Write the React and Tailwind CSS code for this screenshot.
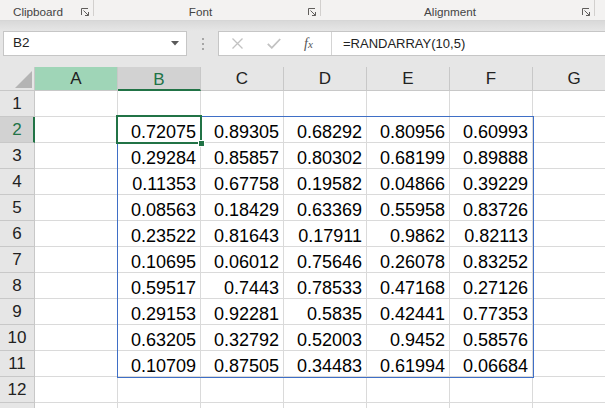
import React from "react";

const data = [
  ["0.72075", "0.89305", "0.68292", "0.80956", "0.60993"],
  ["0.29284", "0.85857", "0.80302", "0.68199", "0.89888"],
  ["0.11353", "0.67758", "0.19582", "0.04866", "0.39229"],
  ["0.08563", "0.18429", "0.63369", "0.55958", "0.83726"],
  ["0.23522", "0.81643", "0.17911", "0.9862", "0.82113"],
  ["0.10695", "0.06012", "0.75646", "0.26078", "0.83252"],
  ["0.59517", "0.7443", "0.78533", "0.47168", "0.27126"],
  ["0.29153", "0.92281", "0.5835", "0.42441", "0.77353"],
  ["0.63205", "0.32792", "0.52003", "0.9452", "0.58576"],
  ["0.10709", "0.87505", "0.34483", "0.61994", "0.06684"],
];

const cols = ["A", "B", "C", "D", "E", "F", "G"];

function Launcher() {
  return (
    <svg width="9" height="9" viewBox="0 0 9 9" className="shrink-0">
      <path d="M0.5 7 V0.5 H7" fill="none" stroke="#605e5c" strokeWidth="1" />
      <path d="M2.5 2.5 L7.5 7.5" fill="none" stroke="#605e5c" strokeWidth="1" />
      <path d="M4 7.5 H7.5 V4" fill="none" stroke="#605e5c" strokeWidth="1" />
    </svg>
  );
}

function HeaderCell({ children, className = "" }) {
  return (
    <div
      className={`flex items-center justify-center border-r border-b border-[#c8c8c8] text-[17px] leading-none text-[#222] ${className}`}
    >
      {children}
    </div>
  );
}

export default function App() {
  return (
    <div
      className="h-[408px] w-[605px] overflow-hidden bg-[#e6e6e6]"
      style={{ fontFamily: '"Liberation Sans", Arial, sans-serif' }}
    >
      {/* Ribbon group labels */}
      <div className="flex h-[20px] items-start bg-[#f3f2f1] text-[11.7px] leading-[14px] text-[#444]">
        <div className="w-[76px] shrink-0 pt-[5px] text-center whitespace-nowrap">Clipboard</div>
        <div className="mt-[8px] ml-[5px] mr-[3px]">
          <Launcher />
        </div>
        <div className="h-[16px] w-px shrink-0 bg-[#d2d0ce]" />
        <div className="w-[213px] shrink-0 pt-[5px] text-center whitespace-nowrap">Font</div>
        <div className="mt-[8px] ml-[1px] mr-[3px]">
          <Launcher />
        </div>
        <div className="h-[16px] w-px shrink-0 bg-[#d2d0ce]" />
        <div className="w-[258px] shrink-0 pt-[5px] text-center whitespace-nowrap">Alignment</div>
        <div className="mt-[8px] ml-[3px] mr-[3px]">
          <Launcher />
        </div>
        <div className="h-[16px] w-px shrink-0 bg-[#d2d0ce]" />
      </div>
      <div className="h-[11px] border-t border-[#d6d6d6] bg-gradient-to-b from-[#d9d9d9] to-[#e6e6e6]" />

      {/* Name box + formula bar */}
      <div className="flex h-[25px] items-stretch">
        <div className="ml-[3px] flex w-[184px] items-center justify-between border border-[#c6c6c6] bg-white pl-[9px] pr-[7px]">
          <span className="text-[13.5px] text-[#222]">B2</span>
          <svg width="8" height="5" viewBox="0 0 8 5">
            <path d="M0 0 H8 L4 4.5 Z" fill="#5a5a5a" />
          </svg>
        </div>
        <div className="flex w-[31px] flex-col items-center justify-center gap-[3px]">
          <div className="h-[2px] w-[2px] bg-[#a6a6a6]" />
          <div className="h-[2px] w-[2px] bg-[#a6a6a6]" />
          <div className="h-[2px] w-[2px] bg-[#a6a6a6]" />
        </div>
        <div className="flex flex-1 items-stretch border border-r-0 border-[#c6c6c6] bg-white">
          <div className="flex w-[113px] items-center border-r border-[#d4d4d4]">
            <svg width="11" height="11" viewBox="0 0 11 11" className="ml-[13px]">
              <path d="M0.5 0.5 L10.5 10.5 M10.5 0.5 L0.5 10.5" stroke="#c2c2c2" strokeWidth="1.3" fill="none" />
            </svg>
            <svg width="14" height="11" viewBox="0 0 14 11" className="ml-[24px]">
              <path d="M0.8 5.8 L4.8 9.8 L13.2 1" stroke="#c2c2c2" strokeWidth="1.8" fill="none" />
            </svg>
            <span
              className="ml-[23px] text-[14px] italic text-[#555]"
              style={{ fontFamily: '"Liberation Serif", "DejaVu Serif", serif' }}
            >
              f<span className="text-[11px]">x</span>
            </span>
          </div>
          <div className="flex items-center pl-[11px] text-[13px] text-[#222]">=RANDARRAY(10,5)</div>
        </div>
      </div>

      <div className="h-[11px]" />

      {/* Grid */}
      <div className="relative">
        <div className="grid w-[616px] grid-cols-[35px_83px_83px_83px_83px_83px_83px_83px] grid-rows-[24px_repeat(13,26px)]">
          {/* corner */}
          <div className="relative border-r border-b border-[#c8c8c8]">
            <svg width="17" height="17" viewBox="0 0 17 17" className="absolute right-[2px] bottom-[2px]">
              <path d="M17 0 V17 H0 Z" fill="#b4b4b4" />
            </svg>
          </div>
          {cols.map((c) => {
            if (c === "A")
              return (
                <HeaderCell key={c} className="bg-[#9fd5b7]">
                  {c}
                </HeaderCell>
              );
            if (c === "B")
              return (
                <div
                  key={c}
                  className="flex items-center justify-center border-r border-b-2 border-r-[#c8c8c8] border-b-[#217346] bg-[#d2d2d2] pt-[2px] text-[17px] leading-none text-[#217346]"
                >
                  {c}
                </div>
              );
            return <HeaderCell key={c}>{c}</HeaderCell>;
          })}

          {Array.from({ length: 13 }).map((_, r) => {
            const rowNum = r + 1;
            const rowData = rowNum >= 2 && rowNum <= 11 ? data[rowNum - 2] : null;
            return (
              <React.Fragment key={rowNum}>
                {rowNum === 2 ? (
                  <div className="flex items-center justify-center border-r-2 border-b border-r-[#217346] border-b-[#c8c8c8] bg-[#d2d2d2] pl-[1px] text-[17px] leading-none text-[#217346]">
                    {rowNum}
                  </div>
                ) : (
                  <HeaderCell>{rowNum <= 12 ? rowNum : ""}</HeaderCell>
                )}
                {cols.map((c, ci) => {
                  const v = rowData && ci >= 1 && ci <= 5 ? rowData[ci - 1] : "";
                  return (
                    <div
                      key={c}
                      className="border-r border-b border-[#dadada] bg-white pt-[5px] pr-[4px] text-right text-[18px] leading-[20px] text-black"
                    >
                      {v}
                    </div>
                  );
                })}
              </React.Fragment>
            );
          })}
        </div>

        {/* Spill range border */}
        <div className="pointer-events-none absolute top-[49px] left-[117px] h-[262px] w-[417px] border border-[#3f6fc6]" />
        {/* Active cell */}
        <div className="pointer-events-none absolute top-[48px] left-[116px] h-[29px] w-[86px] border-2 border-[#217346]" />
        {/* Fill handle */}
        <div className="pointer-events-none absolute top-[73px] left-[198px] h-[7px] w-[7px] border border-white bg-[#217346]" />
      </div>
    </div>
  );
}
